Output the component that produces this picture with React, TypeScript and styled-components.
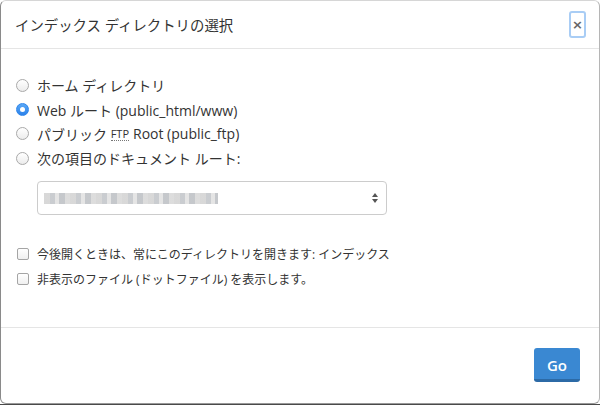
import React from "react"
import styled, { createGlobalStyle } from "styled-components"

const GlobalStyle = createGlobalStyle`
  html, body {
    margin: 0;
    padding: 0;
  }
  body {
    width: 600px;
    height: 405px;
    overflow: hidden;
    background: linear-gradient(to bottom, #fff 404px, #4a4a4a 404px);
    font-family: "Open Sans", "Noto Sans CJK JP", sans-serif;
    color: #333;
  }
`

const Modal = styled.div`
  box-sizing: border-box;
  width: 600px;
  height: 404px;
  display: flex;
  flex-direction: column;
  background: #fff;
  border: 1px solid #d6d6d6;
  border-left-color: #8a8a8a;
  border-right-color: #b5b5b5;
  border-bottom-color: #999;
  border-radius: 6px;
`

const Header = styled.div`
  box-sizing: border-box;
  height: 48px;
  padding: 0 13px 0 14px;
  display: flex;
  align-items: center;
  justify-content: space-between;
  border-bottom: 1px solid #e5e5e5;
`

const Title = styled.h4`
  margin: 0;
  font-size: 14.4px;
  font-weight: 400;
  color: #333;
`

const CloseButton = styled.button`
  box-sizing: border-box;
  width: 17px;
  height: 27px;
  padding: 0;
  border: 2px solid #a9cdf5;
  border-radius: 3px;
  background: #fff;
  color: #666;
  font-family: "DejaVu Sans", sans-serif;
  font-size: 13px;
  font-weight: 700;
  line-height: 1;
  display: flex;
  align-items: center;
  justify-content: center;
`

const Body = styled.div`
  flex: 1;
  padding: 24px 15px 0 15px;
`

const OptionRow = styled.label`
  display: flex;
  align-items: center;
  height: 24.4px;
  font-size: 14px;
  color: #333;
  white-space: nowrap;
`

const Radio = styled.span<{ checked?: boolean }>`
  box-sizing: border-box;
  width: 13px;
  height: 13px;
  margin-right: 8px;
  border-radius: 50%;
  flex: none;
  display: flex;
  align-items: center;
  justify-content: center;
  border: 1px solid ${(p) => (p.checked ? "#2f86ea" : "#a9a9a9")};
  background: ${(p) =>
    p.checked
      ? "linear-gradient(#5aa8f7, #2b82ea)"
      : "linear-gradient(#fff, #ececec)"};
`

const RadioDot = styled.span`
  width: 5px;
  height: 5px;
  border-radius: 50%;
  background: #fff;
`

const Abbr = styled.span`
  font-size: 11px;
  margin-right: 4px;
  border-bottom: 1px dotted #777;
  line-height: 13px;
`

const SelectBox = styled.div`
  box-sizing: border-box;
  width: 350px;
  height: 34px;
  margin: 10px 0 0 21px;
  border: 1px solid #ccc;
  border-radius: 4px;
  display: flex;
  align-items: center;
  justify-content: space-between;
  padding: 0 8px 0 6px;
`

const Blurred = styled.span`
  display: block;
  width: 174px;
  height: 11px;
  margin-top: 1px;
  background: repeating-linear-gradient(
    to right,
    #d4d4d4 0 6px,
    #c4c7cb 6px 11px,
    #e2e2e2 11px 15px,
    #bfc2c6 15px 21px,
    #d9d9d9 21px 26px
  );
  opacity: 0.9;
`

const Arrows = styled.span`
  display: flex;
  flex-direction: column;
  gap: 2px;
  align-items: center;
`

const Tri = styled.span<{ down?: boolean }>`
  width: 0;
  height: 0;
  border-left: 3.5px solid transparent;
  border-right: 3.5px solid transparent;
  ${(p) =>
    p.down ? "border-top: 4px solid #555;" : "border-bottom: 4px solid #555;"}
`

const CheckList = styled.div`
  margin-top: 27px;
`

const CheckRow = styled.label`
  display: flex;
  align-items: center;
  height: 25px;
  font-size: 12px;
  color: #333;
  white-space: nowrap;
`

const Checkbox = styled.span`
  box-sizing: border-box;
  width: 12px;
  height: 12px;
  margin-left: 1px;
  margin-right: 8px;
  border: 1px solid #a5a5a5;
  border-radius: 2px;
  background: linear-gradient(#fff, #f0f0f0);
  flex: none;
`

const Footer = styled.div`
  box-sizing: border-box;
  height: 76px;
  border-top: 1px solid #e5e5e5;
  display: flex;
  justify-content: flex-end;
  align-items: flex-start;
  padding: 20px 19px 0 0;
`

const GoButton = styled.button`
  box-sizing: border-box;
  width: 46px;
  height: 34px;
  border: none;
  border-bottom: 3px solid #2c6aa6;
  border-radius: 3px;
  background: #3a88d2;
  color: #fff;
  font-family: "Open Sans", sans-serif;
  font-size: 15px;
  font-weight: 600;
  padding: 2px 0 0;
`

export default function App() {
  return (
    <>
      <GlobalStyle />
      <Modal>
        <Header>
          <Title>インデックス ディレクトリの選択</Title>
          <CloseButton>×</CloseButton>
        </Header>
        <Body>
          <OptionRow>
            <Radio />
            ホーム ディレクトリ
          </OptionRow>
          <OptionRow>
            <Radio checked>
              <RadioDot />
            </Radio>
            Web ルート (public_html/www)
          </OptionRow>
          <OptionRow>
            <Radio />
            パブリック&nbsp;<Abbr>FTP</Abbr>Root (public_ftp)
          </OptionRow>
          <OptionRow>
            <Radio />
            次の項目のドキュメント ルート:
          </OptionRow>
          <SelectBox>
            <Blurred />
            <Arrows>
              <Tri />
              <Tri down />
            </Arrows>
          </SelectBox>
          <CheckList>
            <CheckRow>
              <Checkbox />
              今後開くときは、常にこのディレクトリを開きます: インデックス
            </CheckRow>
            <CheckRow>
              <Checkbox />
              非表示のファイル (ドットファイル) を表示します。
            </CheckRow>
          </CheckList>
        </Body>
        <Footer>
          <GoButton>Go</GoButton>
        </Footer>
      </Modal>
    </>
  )
}
